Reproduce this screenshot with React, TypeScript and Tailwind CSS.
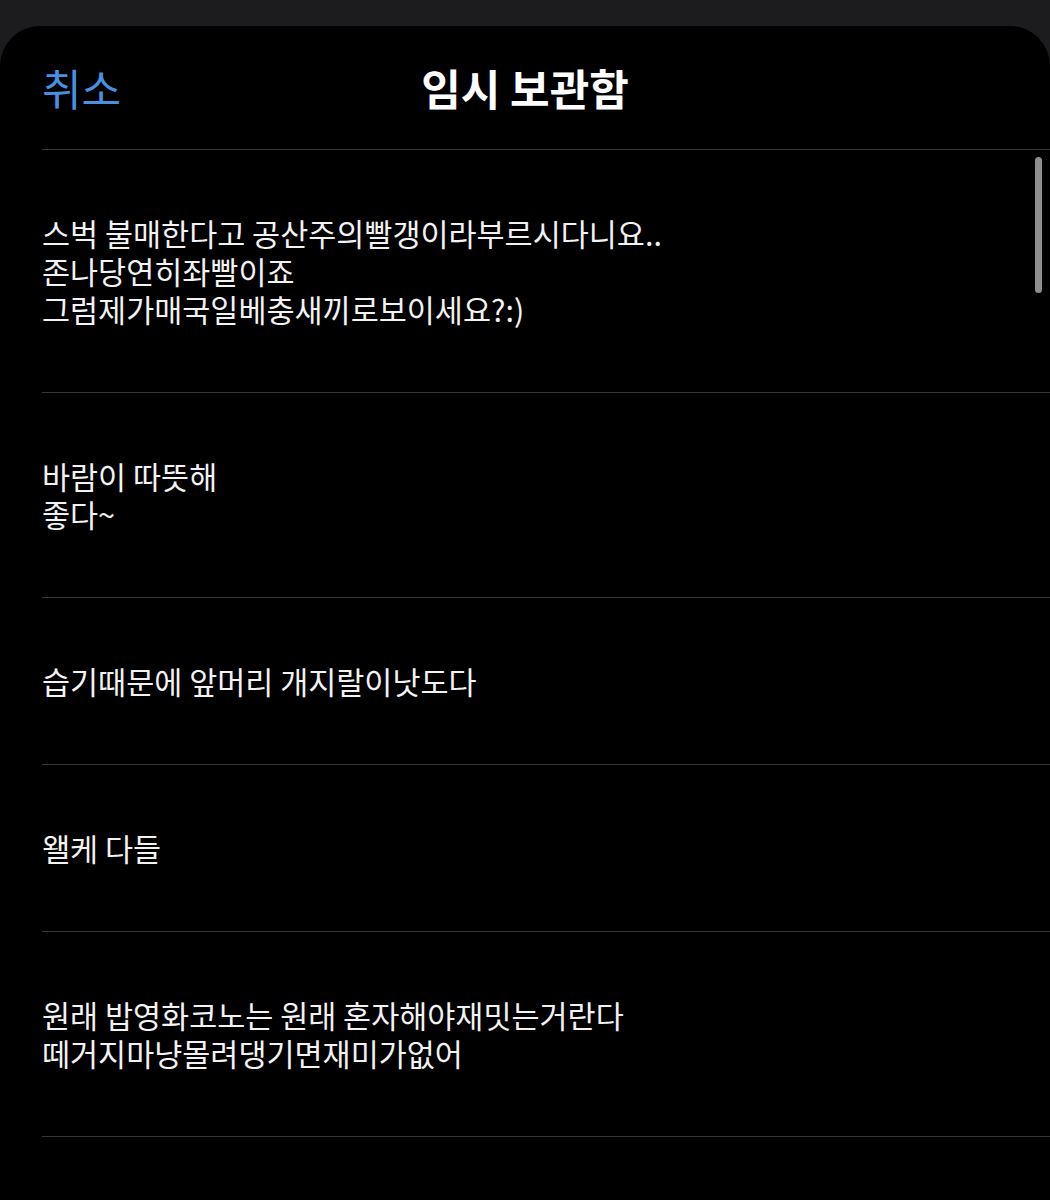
import React from 'react';

const drafts: string[] = [
  '스벅 불매한다고 공산주의빨갱이라부르시다니요..\n존나당연히좌빨이죠\n그럼제가매국일베충새끼로보이세요?:)',
  '바람이 따뜻해\n좋다~',
  '습기때문에 앞머리 개지랄이낫도다',
  '왤케 다들',
  '원래 밥영화코노는 원래 혼자해야재밋는거란다\n떼거지마냥몰려댕기면재미가없어',
];

const App: React.FC = () => {
  return (
    <div
      className="h-[1200px] w-full overflow-hidden bg-[#1c1c1e] pt-[26px]"
      style={{ fontFamily: '"Noto Sans CJK KR", "Noto Sans", sans-serif' }}
    >
      <div className="relative h-full overflow-hidden rounded-t-[40px] bg-black">
        {/* Header */}
        <div className="pl-[42px]">
          <div className="relative flex h-[124px] items-center border-b border-[#38383a]">
            <button className="text-[43px] leading-none text-[#4a90e2]">취소</button>
            <h1 className="absolute left-0 right-0 mx-auto w-max -translate-x-[21px] text-[43px] font-bold leading-none text-white">
              임시 보관함
            </h1>
          </div>

          {/* Draft list */}
          <ul>
            {drafts.map((text, i) => (
              <li
                key={i}
                className="whitespace-pre-line border-b border-[#38383a] py-[64px] text-[30.5px] leading-[38px] text-[#f2f2f2]"
              >
                {text}
              </li>
            ))}
          </ul>
        </div>

        {/* Scroll indicator */}
        <div className="absolute right-[8px] top-[131px] h-[136px] w-[7px] rounded-full bg-[#8e8e8e]" />
      </div>
    </div>
  );
};

export default App;
